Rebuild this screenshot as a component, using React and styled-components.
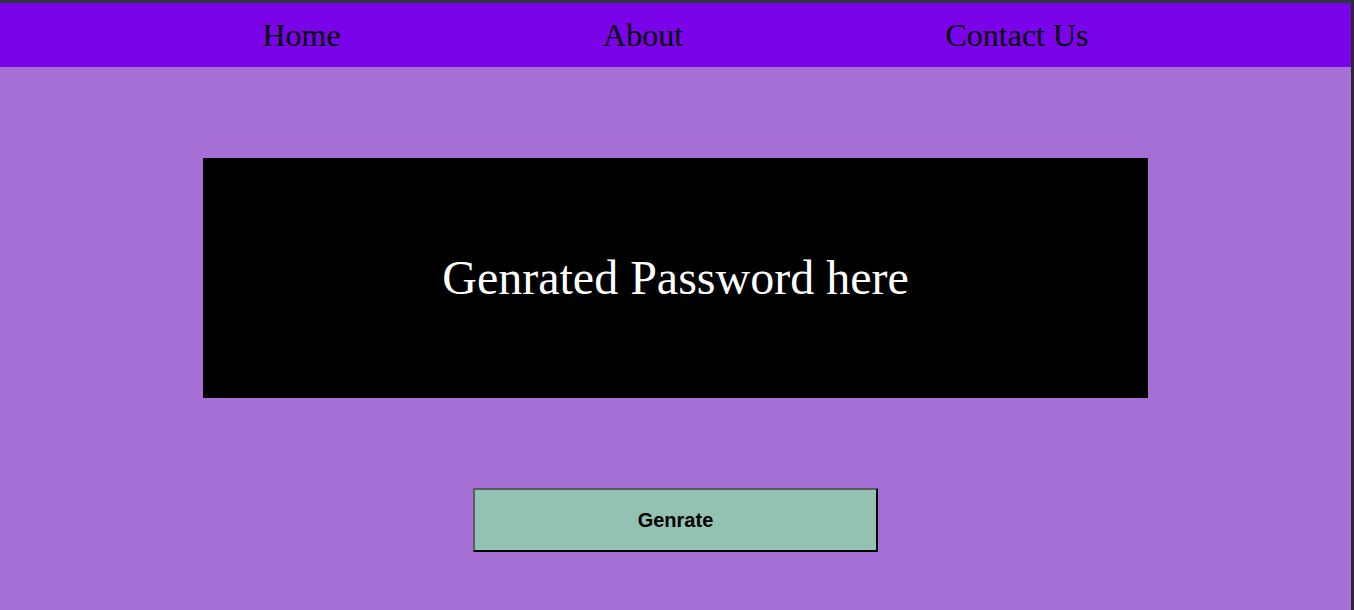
import React from "react";
import styled, { createGlobalStyle } from "styled-components";

const GlobalStyle = createGlobalStyle`
  * {
    box-sizing: border-box;
  }
  html,
  body {
    margin: 0;
    padding: 0;
  }
  body {
    min-height: 100vh;
    background: #a56fd6;
    border-top: 3px solid #30343a;
    border-right: 3px solid #2b2b2b;
    font-family: "Liberation Serif", "Times New Roman", serif;
  }
`;

const Nav = styled.nav`
  background: #7b03e9;
  height: 64px;
  display: flex;
  align-items: center;
`;

const NavList = styled.ul`
  list-style: none;
  margin: 0;
  padding: 0;
  width: 100%;
  display: flex;
  justify-content: space-evenly;
`;

const NavItem = styled.li`
  font-size: 32px;
  color: #000;
  line-height: 1;
`;

const Main = styled.main`
  display: flex;
  flex-direction: column;
  align-items: center;
  padding-top: 91px;
`;

const PasswordBox = styled.div`
  width: 70%;
  height: 240px;
  background: #000;
  color: #fff;
  font-size: 48px;
  display: flex;
  align-items: center;
  justify-content: center;
  padding-bottom: 2px;
`;

const GenButton = styled.button`
  margin-top: 90px;
  width: 30%;
  height: 64px;
  background: #93c2b2;
  border: 2px solid;
  border-color: #5a5a5a #000 #000 #5a5a5a;
  font-family: "Liberation Sans", Arial, sans-serif;
  font-weight: bold;
  font-size: 20px;
  color: #000;
  padding-top: 2px;
  cursor: pointer;
`;

export default function App() {
  return (
    <>
      <GlobalStyle />
      <Nav>
        <NavList>
          <NavItem>Home</NavItem>
          <NavItem>About</NavItem>
          <NavItem>Contact Us</NavItem>
        </NavList>
      </Nav>
      <Main>
        <PasswordBox>Genrated Password here</PasswordBox>
        <GenButton>Genrate</GenButton>
      </Main>
    </>
  );
}
